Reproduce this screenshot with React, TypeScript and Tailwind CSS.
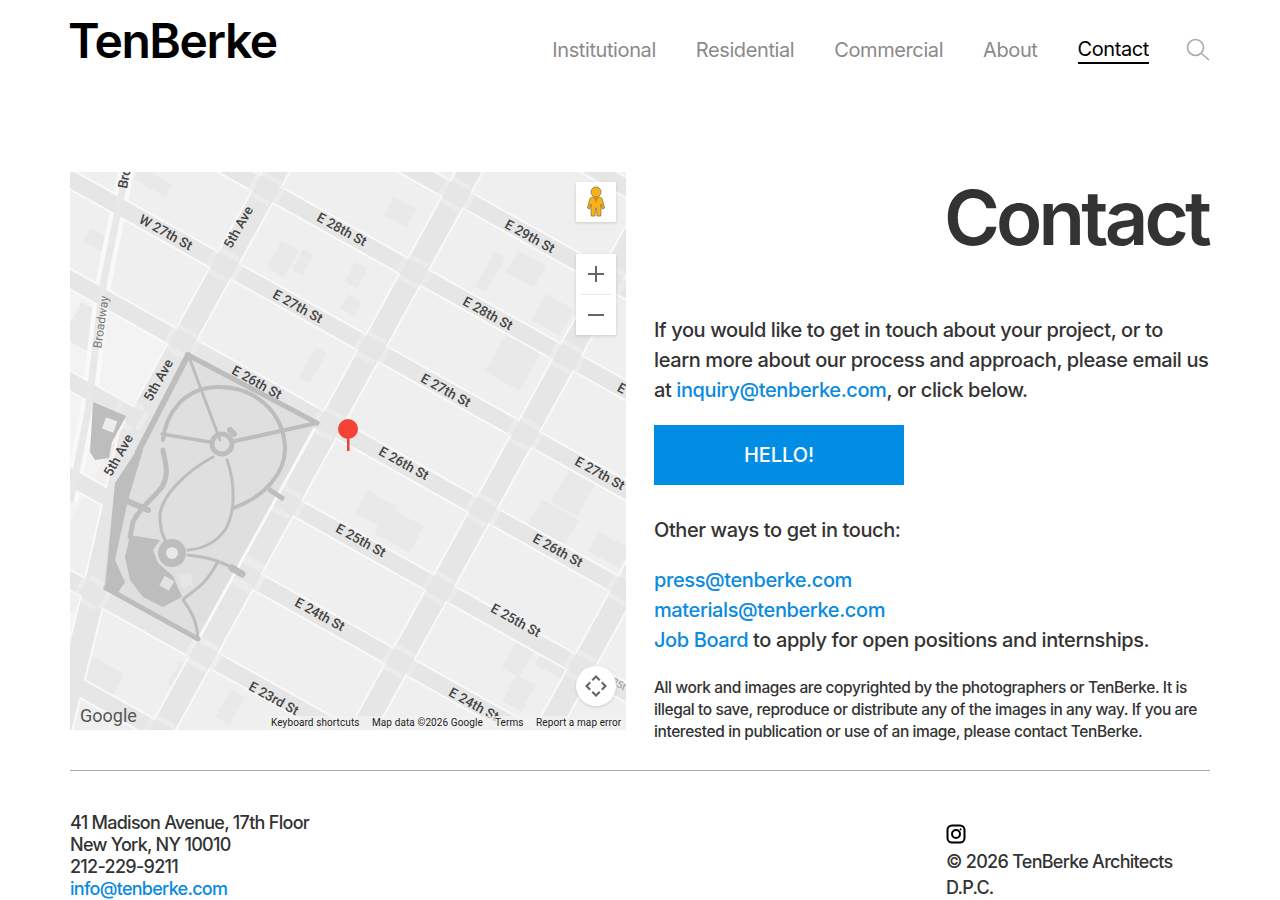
import React from "react";

const SLOPE = 0.56;
const streetY0 = [-398, -296, -194, -93, 7, 107, 209, 305, 408, 510, 612, 714, 816];
const aveX0 = [399, 599, 784];
const buildings: number[][] = [
  [330, 40, 26, 20], [456, 97, 32, 25], [443, 190, 40, 44], [483, 143, 32, 30], [286, 103, 14, 22], [281, 133, 16, 16],
  [306, 338, 34, 26], [329, 358, 40, 30], [503, 321, 30, 36], [483, 351, 42, 30], [539, 378, 36, 22], [449, 485, 20, 36],
  [449, 521, 22, 30], [483, 491, 30, 20], [83, 10, 36, 14], [213, 87, 20, 30], [233, 90, 12, 24], [243, 193, 12, 34],
  [33, 505, 36, 26], [117, 508, 30, 26], [160, 535, 16, 32], [390, 30, 16, 14], [30, 70, 30, 16], [15, 155, 30, 40], [420, 100, 12, 40],
];
const labels: [string, number, number][] = [
  ["W 27th St", 96, 60], ["E 28th St", 272, 57], ["E 29th St", 460, 64], ["E 28th St", 418, 141], ["E 27th St", 228, 134],
  ["E 27th St", 376, 218], ["E 26th St", 187, 210], ["E 26th St", 334, 291], ["E 27th St", 530, 301], ["E 25th St", 291, 368],
  ["E 26th St", 488, 378], ["E 24th St", 250, 442], ["E 25th St", 446, 448], ["E 23rd St", 204, 526], ["E 24th St", 404, 532],
  ["E", 552, 216],
];
const aveLabels: [string, number, number][] = [["5th Ave", 168, 55], ["5th Ave", 88, 208], ["5th Ave", 48, 283]];

function MapDrawing() {
  const streets = streetY0.map((y0) => `M-20 ${y0 - 20 * SLOPE}L600 ${y0 + 600 * SLOPE}`);
  const aves = aveX0.map((x0) => `M${x0 + 20 * 0.55} -20L${x0 - 600 * 0.55} 600`);
  const fifth = "M217 -20L60 265L23 425L-10 558";
  const crossings: [number, number][] = [];
  [206, ...aveX0].forEach((x0) => {
    streetY0.forEach((y0) => {
      const y = (y0 + x0 * SLOPE) / (1 + 0.55 * SLOPE);
      const x = x0 - 0.55 * y;
      if (x0 === 206 && y > 200) return;
      if (x > -20 && x < 576 && y > -20 && y < 570) crossings.push([x, y]);
    });
  });
  crossings.push([60, 243], [23, 421], [133, 483], [180, 401]);
  return (
    <svg width="556" height="558" viewBox="0 0 556 558" className="block">
      <rect width="556" height="558" fill="#efefef" />
      <path d="M0 350L60 240L100 170L0 100Z" fill="#f3f3f3" />
      <path d="M0 440L25 440L-10 558Z" fill="#f5f5f5" />
      {buildings.map(([x, y, w, h], i) => (
        <rect key={i} x={x - w / 2} y={y - h / 2} width={w} height={h} fill="#e9e9e9" transform={`rotate(29 ${x} ${y})`} />
      ))}
      <g fill="none">
        {streets.map((d, i) => <path key={i} d={d} stroke="#f9f9f9" strokeWidth="20" />)}
        {aves.map((d, i) => <path key={i} d={d} stroke="#f9f9f9" strokeWidth="26" />)}
        <path d={fifth} stroke="#f9f9f9" strokeWidth="26" />
        <path d="M58 -10L33 113L18 240L0 330" stroke="#f9f9f9" strokeWidth="16" />
        {streets.map((d, i) => <path key={i} d={d} stroke="#e6e6e6" strokeWidth="16" />)}
        {aves.map((d, i) => <path key={i} d={d} stroke="#e6e6e6" strokeWidth="22" />)}
        <path d={fifth} stroke="#e6e6e6" strokeWidth="22" />
        <path d="M58 -10L33 113L18 240L0 330" stroke="#e8e8e8" strokeWidth="7" />
      </g>
      {crossings.map(([x, y], i) => (
        <g key={i} transform={`translate(${x} ${y}) rotate(29)`} stroke="#f1f1f1" strokeWidth="5" strokeDasharray="1 1" fill="none">
          <path d="M-14 -10V10M14 -10V10" />
          <path d="M-10 -12H10M-10 12H10" />
        </g>
      ))}
      {/* Madison Square Park */}
      <path d="M118 180L250 250L129 470L33 417L45 315Z" fill="#dfdfdf" />
      <path d="M66 300L105 224L60 350Z" fill="#dfdfdf" />
      <path d="M245 256L128 468" stroke="#fafafa" strokeWidth="3" fill="none" />
      <path d="M73 278L58 328L45 388L55 410L47 422L35 416L45 311L67 278Z" fill="#bdbdbd" />
      <g fill="none" stroke="#bdbdbd" strokeLinecap="round" strokeLinejoin="round">
        <path d="M118 183L247 251" strokeWidth="5" />
        <path d="M118 183L68 280" strokeWidth="6" />
        <path d="M36 416L128 467" strokeWidth="5" />
        <path d="M119 185L150 268" strokeWidth="3" />
        <path d="M247 251L165 269" strokeWidth="4" />
        <path d="M140 270L92 262" strokeWidth="3.5" />
        <path d="M93 268C96 240 115 216 147 215C185 214 213 240 215 275C216 300 195 325 163 336" strokeWidth="4" />
        <path d="M157 288C165 310 166 340 155 358C145 372 130 377 118 378" strokeWidth="3" />
        <path d="M143 285C115 300 90 325 90 345C90 355 92 362 95 368" strokeWidth="3" />
        <path d="M93 278C95 292 100 300 92 315C80 330 70 335 63 350L60 365" strokeWidth="5" />
        <path d="M78 338L57 329" strokeWidth="6" />
        <path d="M118 383C135 385 150 388 170 400" strokeWidth="3" />
        <path d="M162 396L172 402" strokeWidth="7" />
        <path d="M147 391C135 415 120 420 113 428C122 440 127 450 128 467" strokeWidth="3" />
        <path d="M200 318L212 326" strokeWidth="5" />
        <circle cx="152" cy="272" r="10" strokeWidth="5" />
        <path d="M160 258L164 262" strokeWidth="6" />
      </g>
      <path d="M60 363L90 368L83 378L88 391L103 404L112 425L93 435L73 425L60 408L55 385Z" fill="#bdbdbd" />
      <circle cx="102" cy="381" r="14" fill="#bdbdbd" />
      <circle cx="102" cy="381" r="6" fill="#e8e8e8" />
      <rect x="91" y="406" width="11" height="11" fill="#e2e2e2" transform="rotate(29 97 412)" />
      <rect x="110" y="402" width="12" height="12" fill="#e6e6e6" transform="rotate(-12 116 408)" />
      <path d="M23 230L56 244L42 270L39 286L25 288L20 280Z" fill="#bdbdbd" />
      <rect x="34" y="247" width="12" height="12" fill="#ececec" transform="rotate(20 40 252)" />
      <g fontFamily="Roboto, 'Liberation Sans', sans-serif" fontSize="13.5" fontWeight="500" fill="#444" textAnchor="middle" dominantBaseline="central">
        {labels.map(([t, x, y], i) => (
          <text key={i} x={x} y={y} transform={`rotate(29 ${x} ${y})`}>{t}</text>
        ))}
        {aveLabels.map(([t, x, y], i) => (
          <text key={i} x={x} y={y} transform={`rotate(-61 ${x} ${y})`}>{t}</text>
        ))}
        <text x="54" y="6" transform="rotate(-80 54 6)">Bro</text>
        <text x="31" y="150" fontSize="12" fontWeight="400" fill="#777" transform="rotate(-82 31 150)">Broadway</text>
        <text x="549" y="512" fontSize="10" fontWeight="400" fill="#999" transform="rotate(29 549 512)">25t</text>
      </g>
    </svg>
  );
}

function Pegman() {
  return (
    <svg width="20" height="32" viewBox="0 0 20 32">
      <g fill="#f7b21d" stroke="#8a7440" strokeWidth="0.8" strokeLinejoin="round">
        <path d="M7 11H13C15 11 16 12 16.5 14L18.5 22L16.5 23L15 18V21L14.8 30H11L10.5 22H9.5L9 30H5.2L5 21V18L3.5 23L1.5 22L3.5 14C4 12 5 11 7 11Z" />
        <circle cx="10" cy="6" r="5" />
      </g>
      <path d="M7.5 12H12.5L10 17Z" fill="#e8831a" />
    </svg>
  );
}

function MapPanel() {
  return (
    <div className="relative w-[556px] h-[558px] shrink-0 overflow-hidden tracking-normal font-normal">
      <MapDrawing />
      <div className="absolute left-[506px] top-[10px] w-10 h-10 bg-white flex items-center justify-center shadow-[0_1px_3px_rgba(0,0,0,0.15)]">
        <Pegman />
      </div>
      <div className="absolute left-[506px] top-[82px] w-10 h-[81px] bg-white flex flex-col items-center shadow-[0_1px_3px_rgba(0,0,0,0.15)]">
        <div className="h-10 flex items-center justify-center">
          <svg width="18" height="18" viewBox="0 0 18 18"><path d="M8 1h2v7h7v2h-7v7H8v-7H1V8h7z" fill="#666" /></svg>
        </div>
        <div className="w-[30px] h-px bg-[#e6e6e6]" />
        <div className="h-10 flex items-center justify-center">
          <svg width="18" height="18" viewBox="0 0 18 18"><path d="M1 8h16v2H1z" fill="#666" /></svg>
        </div>
      </div>
      <div className="absolute left-[506px] top-[494px] w-10 h-10 rounded-full bg-white flex items-center justify-center shadow-[0_1px_3px_rgba(0,0,0,0.15)]">
        <svg width="26" height="26" viewBox="0 0 26 26" fill="#666">
          <path d="M13 2L17.5 6.5L16 8L13 5L10 8L8.5 6.5Z" />
          <path d="M13 24L8.5 19.5L10 18L13 21L16 18L17.5 19.5Z" />
          <path d="M2 13L6.5 8.5L8 10L5 13L8 16L6.5 17.5Z" />
          <path d="M24 13L19.5 17.5L18 16L21 13L18 10L19.5 8.5Z" />
        </svg>
      </div>
      <div className="absolute left-[10px] top-[532px] font-['Roboto',sans-serif] text-[18px] leading-[24px] text-[#555]">Google</div>
      <div className="absolute left-[196px] right-0 bottom-0 h-[14px] flex bg-[#f2f2f2]/70 font-['Roboto',sans-serif] text-[10px] leading-[14px] text-[#222] tracking-[0.01em]">
        <span className="w-[101px] pl-[5px] whitespace-nowrap">Keyboard shortcuts</span>
        <span className="w-[123px] pl-[5px] whitespace-nowrap">Map data ©2026 Google</span>
        <span className="w-[41px] pl-[5px] whitespace-nowrap">Terms</span>
        <span className="pl-[5px] whitespace-nowrap">Report a map error</span>
      </div>
      <svg className="absolute left-[266px] top-[246px]" width="24" height="34" viewBox="0 0 24 34">
        <rect x="11" y="12" width="2.5" height="21" fill="#ea4335" />
        <circle cx="12" cy="11" r="10" fill="#f44336" />
      </svg>
    </div>
  );
}

const link = "text-[#0a8ae0]";

export default function App() {
  return (
    <div className="w-[1280px] px-[70px] bg-white font-['Inter',sans-serif] font-[450] text-[#333] tracking-[-0.025em]">
      <header className="h-[172px] flex justify-between items-start">
        <div className="mt-[13px] -ml-[2px] text-[48px] leading-[56px] font-semibold text-black tracking-[-0.03em]">TenBerke</div>
        <nav className="mt-[36px] flex items-center gap-[40px] text-[20px] leading-[28px] font-[435] text-[#8a8a8a]">
          <a>Institutional</a>
          <a>Residential</a>
          <a>Commercial</a>
          <a>About</a>
          <a className="text-black border-b-2 border-black leading-[26px]">Contact</a>
          <svg className="-ml-[3px]" width="24" height="24" viewBox="0 0 24 24" fill="none" stroke="#aaa" strokeWidth="1.6">
            <circle cx="9.5" cy="9.5" r="8" />
            <path d="M15.5 15.5L23 22" />
          </svg>
        </nav>
      </header>
      <main className="flex gap-[28px] items-start h-[599px] border-b border-[#aaa]">
        <MapPanel />
        <div className="flex-1">
          <h1 className="text-right pr-[2px] text-[76px] leading-[90px] font-semibold tracking-[-0.05em]">Contact</h1>
          <p className="mt-[53px] text-[20px] leading-[30px]">
            If you would like to get in touch about your project, or to learn more about our process and approach, please email us at <a className={link}>inquiry@tenberke.com</a>, or click below.
          </p>
          <button className="mt-[20px] block w-[250px] h-[60px] bg-[#008de3] text-white text-[20px] tracking-[-0.005em]">HELLO!</button>
          <p className="mt-[30px] text-[20px] leading-[30px]">Other ways to get in touch:</p>
          <p className="mt-[20px] text-[20px] leading-[30px]">
            <a className={link}>press@tenberke.com</a><br />
            <a className={link}>materials@tenberke.com</a><br />
            <a className={link}>Job Board</a> to apply for open positions and internships.
          </p>
          <p className="mt-[22px] text-[15.5px] leading-[22px]">
            All work and images are copyrighted by the photographers or TenBerke. It is illegal to save, reproduce or distribute any of the images in any way. If you are interested in publication or use of an image, please contact TenBerke.
          </p>
        </div>
      </main>
      <footer className="flex justify-between pt-[41px] text-[18px] leading-[22px] tracking-[-0.04em]">
        <div>
          41 Madison Avenue, 17th Floor<br />
          New York, NY 10010<br />
          212-229-9211<br />
          <a className={link}>info@tenberke.com</a>
        </div>
        <div className="w-[264px] pt-[12px] leading-[26px]">
          <svg className="block mb-[5px]" width="20" height="20" viewBox="0 0 20 20" fill="none" stroke="#000" strokeWidth="2">
            <rect x="1.5" y="1.5" width="17" height="17" rx="4.5" />
            <circle cx="10" cy="10" r="4" />
            <circle cx="14.6" cy="5.4" r="0.6" fill="#000" strokeWidth="1" />
          </svg>
          © 2026 TenBerke Architects D.P.C.
        </div>
      </footer>
    </div>
  );
}
